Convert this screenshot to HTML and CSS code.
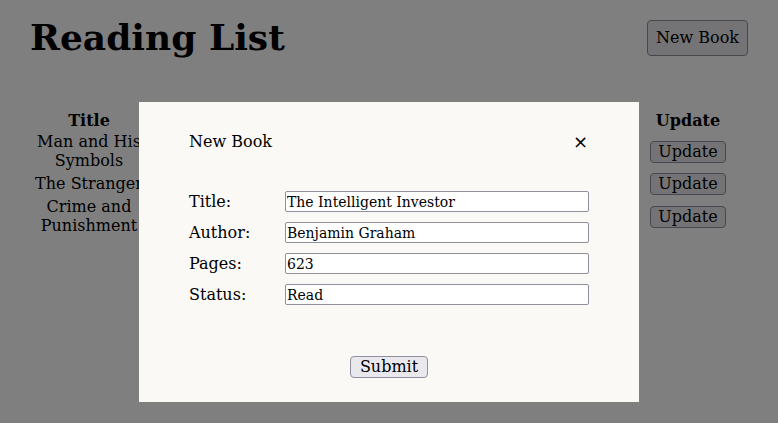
FILE: index.html
```html
<!DOCTYPE html>
<html lang="en">
<head>
<meta charset="utf-8">
<title>Reading List</title>
<link rel="stylesheet" href="styles.css">
</head>
<body>
<div class="page">
  <header class="top">
    <h1 class="top__title">Reading List</h1>
    <button class="btn btn--big" type="button">New Book</button>
  </header>
  <table class="books">
    <colgroup>
      <col class="col-title">
      <col class="col-author">
      <col class="col-pages">
      <col class="col-status">
      <col class="col-update">
    </colgroup>
    <thead>
      <tr><th>Title</th><th>Author</th><th>Pages</th><th>Status</th><th>Update</th></tr>
    </thead>
    <tbody>
      <tr><td>Man and His Symbols</td><td>Carl Jung</td><td>320</td><td>Read</td><td><button class="btn btn--row" type="button">Update</button></td></tr>
      <tr><td>The Stranger</td><td>Albert Camus</td><td>123</td><td>Read</td><td><button class="btn btn--row" type="button">Update</button></td></tr>
      <tr><td>Crime and Punishment</td><td>Fyodor Dostoevsky</td><td>671</td><td>Unread</td><td><button class="btn btn--row" type="button">Update</button></td></tr>
    </tbody>
  </table>
</div>

<div class="overlay">
  <div class="modal">
    <div class="modal__head">
      <span class="modal__title">New Book</span>
      <button class="modal__close" type="button" aria-label="Close">×</button>
    </div>
    <form class="form">
      <div class="form__row">
        <label class="form__label" for="f-title">Title:</label>
        <input class="form__input" id="f-title" type="text" value="The Intelligent Investor">
      </div>
      <div class="form__row">
        <label class="form__label" for="f-author">Author:</label>
        <input class="form__input" id="f-author" type="text" value="Benjamin Graham">
      </div>
      <div class="form__row">
        <label class="form__label" for="f-pages">Pages:</label>
        <input class="form__input" id="f-pages" type="text" value="623">
      </div>
      <div class="form__row">
        <label class="form__label" for="f-status">Status:</label>
        <input class="form__input" id="f-status" type="text" value="Read">
      </div>
      <div class="form__actions">
        <button class="btn btn--submit" type="button">Submit</button>
      </div>
    </form>
  </div>
</div>
</body>
</html>
```
FILE: styles.css
```css
html, body {
  background: #ffffff;
}
body {
  margin: 8px;
  font-family: "DejaVu Serif", serif;
  font-size: 16px;
  color: #000;
}
.page {
  padding: 0 22px;
}
.top {
  display: flex;
  justify-content: space-between;
  align-items: center;
  padding-top: 8px;
}
.top__title {
  margin: 0;
  font-size: 36px;
  font-weight: bold;
}
.btn {
  font-family: "DejaVu Serif", serif;
  font-size: 16px;
  line-height: 18px;
  color: #000;
  background: #e9e9ed;
  border: 1px solid #8f8f9d;
  border-radius: 4px;
  padding: 1px 8px;
  margin: 0;
}
.btn--big {
  padding: 8px 8px;
  margin-top: 1px;
}
.btn--row {
  padding: 1px 7px;
  margin: 1px 0 0;
}
.btn--submit {
  padding: 1px 9px;
}
.books {
  margin-top: 52px;
  width: 100%;
  table-layout: fixed;
  border-spacing: 0;
}
.col-title { width: 118px; }
.col-update { width: 120px; }
.books th, .books td {
  padding: 1px;
  text-align: center;
  vertical-align: middle;
}
.overlay {
  position: fixed;
  inset: 0;
  background: rgba(0, 0, 0, 0.5);
  display: flex;
  flex-direction: column;
  align-items: center;
}
.modal {
  margin-top: 102px;
  width: 500px;
  height: 300px;
  box-sizing: border-box;
  padding: 30px 50px 0;
  background: #faf9f6;
}
.modal__head {
  display: flex;
  justify-content: space-between;
  align-items: center;
}
.modal__close {
  font-family: "DejaVu Sans", sans-serif;
  font-size: 18px;
  line-height: 18px;
  background: none;
  border: 0;
  padding: 0 1px 0 0;
  color: #000;
}
.form {
  margin-top: 40px;
  display: flex;
  flex-direction: column;
  gap: 10px;
}
.form__row {
  display: flex;
  align-items: center;
}
.form__label {
  width: 96px;
}
.form__input {
  box-sizing: border-box;
  width: 304px;
  height: 21px;
  padding: 0 1px;
  border: 1px solid #8f8f9d;
  border-radius: 2px;
  background: #fff;
  font-family: "DejaVu Serif", serif;
  font-size: 14px;
  color: #000;
}
.form__actions {
  margin-top: 41px;
  display: flex;
  justify-content: center;
}
```
